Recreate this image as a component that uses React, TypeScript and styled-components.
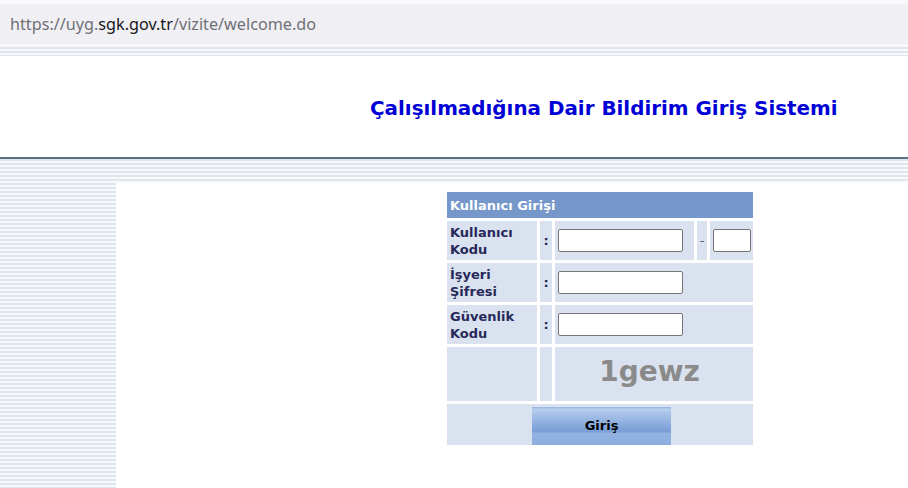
import styled, { createGlobalStyle } from "styled-components";

const GlobalStyle = createGlobalStyle`
  html, body {
    margin: 0;
    padding: 0;
    background: #ffffff;
  }
  body {
    width: 908px;
    height: 488px;
    overflow: hidden;
  }
`;

const stripes = `repeating-linear-gradient(to bottom, #dfe5ed 0px, #dfe5ed 2px, #f8f9fb 2px, #f8f9fb 4px)`;

const Chrome = styled.div`
  background: #f9f9fb;
  padding: 4px 0 3px;
`;

const AddressBar = styled.div`
  height: 40px;
  background: #f0f0f4;
  display: flex;
  align-items: center;
  padding-left: 10px;
  font-family: "Noto Sans", "Open Sans", sans-serif;
  font-size: 16.2px;
  color: #6f6f76;
`;

const Host = styled.span`
  color: #16161a;
`;

const TopStripe = styled.div`
  height: ${(props: { h: number }) => props.h}px;
  background: ${stripes};
`;

const Banner = styled.div`
  height: 101px;
  display: flex;
  align-items: center;
  padding-left: 370px;
  border-bottom: 2px solid #5e6f83;
`;

const Title = styled.h1`
  margin: 0;
  font-family: "DejaVu Sans", Verdana, sans-serif;
  font-weight: bold;
  font-size: 19.9px;
  color: #0000d6;
  white-space: nowrap;
  position: relative;
  top: 2px;
`;

const Body = styled.div`
  display: flex;
  height: 306px;
`;

const SideBar = styled.div`
  width: 116px;
  flex-shrink: 0;
  background: ${stripes};
`;

const Main = styled.div`
  flex: 1;
  padding: 6px 0 0 328px;
`;

const LoginTable = styled.table`
  table-layout: fixed;
  width: 312px;
  border-spacing: 3px;
  font-family: "DejaVu Sans", Verdana, sans-serif;
  font-size: 13px;
  font-weight: bold;
  color: #27295a;
`;

const HeadCell = styled.td`
  height: 26px;
  padding: 0 0 0 3px;
  background: #7597c9;
  color: #ffffff;
  vertical-align: middle;
`;

const Cell = styled.td<{ h?: number; center?: boolean }>`
  height: ${(p) => p.h ?? 39}px;
  padding: 0 0 0 3px;
  background: #dae2ef;
  vertical-align: middle;
  text-align: ${(p) => (p.center ? "center" : "left")};
  line-height: 17px;
`;

const Colon = styled(Cell)`
  padding: 0;
  text-align: center;
`;

const Dash = styled(Colon)`
  font-weight: normal;
  color: #555a70;
`;

const TextInput = styled.input<{ w: number }>`
  box-sizing: border-box;
  width: ${(p) => p.w}px;
  height: 23px;
  margin: 0;
  padding: 0 3px;
  border: 1px solid #767676;
  border-radius: 2px;
  background: #ffffff;
  display: block;
`;

const Captcha = styled.div`
  font-family: "DejaVu Sans", Verdana, sans-serif;
  font-size: 28px;
  font-weight: bold;
  color: #8a8a8a;
  text-align: center;
  padding: 0 12px 6px 0;
`;

const Button = styled.button`
  width: 139px;
  height: 38px;
  border: none;
  margin: 2px 0 0;
  font-family: "DejaVu Sans", Verdana, sans-serif;
  font-size: 13px;
  font-weight: bold;
  color: #000000;
  background: linear-gradient(
    to bottom,
    #8fb0df 0px,
    #b8cfee 2px,
    #a5c0e8 8px,
    #7ea2d8 22px,
    #7a9ed5 25px,
    #92b3e2 26px,
    #8cadde 38px
  );
  cursor: pointer;
`;

export default function App() {
  return (
    <>
      <GlobalStyle />
      <Chrome>
        <AddressBar>
          https://uyg.<Host>sgk.gov.tr</Host>/vizite/welcome.do
        </AddressBar>
      </Chrome>
      <TopStripe h={9} />
      <Banner>
        <Title>Çalışılmadığına Dair Bildirim Giriş Sistemi</Title>
      </Banner>
      <TopStripe h={24} />
      <Body>
        <SideBar />
        <Main>
          <LoginTable>
            <colgroup>
              <col style={{ width: 90 }} />
              <col style={{ width: 12 }} />
              <col style={{ width: 139 }} />
              <col style={{ width: 10 }} />
              <col style={{ width: 43 }} />
            </colgroup>
            <tbody>
              <tr>
                <HeadCell colSpan={5}>Kullanıcı Girişi</HeadCell>
              </tr>
              <tr>
                <Cell>
                  Kullanıcı
                  <br />
                  Kodu
                </Cell>
                <Colon>:</Colon>
                <Cell>
                  <TextInput w={125} type="text" />
                </Cell>
                <Dash>-</Dash>
                <Cell>
                  <TextInput w={38} type="text" />
                </Cell>
              </tr>
              <tr>
                <Cell>
                  İşyeri
                  <br />
                  Şifresi
                </Cell>
                <Colon>:</Colon>
                <Cell colSpan={3}>
                  <TextInput w={125} type="password" />
                </Cell>
              </tr>
              <tr>
                <Cell>
                  Güvenlik
                  <br />
                  Kodu
                </Cell>
                <Colon>:</Colon>
                <Cell colSpan={3}>
                  <TextInput w={125} type="text" />
                </Cell>
              </tr>
              <tr>
                <Cell h={54} />
                <Colon h={54} />
                <Cell h={54} colSpan={3}>
                  <Captcha>1gewz</Captcha>
                </Cell>
              </tr>
              <tr>
                <Cell h={41} colSpan={5} center>
                  <Button type="button">Giriş</Button>
                </Cell>
              </tr>
            </tbody>
          </LoginTable>
        </Main>
      </Body>
    </>
  );
}
